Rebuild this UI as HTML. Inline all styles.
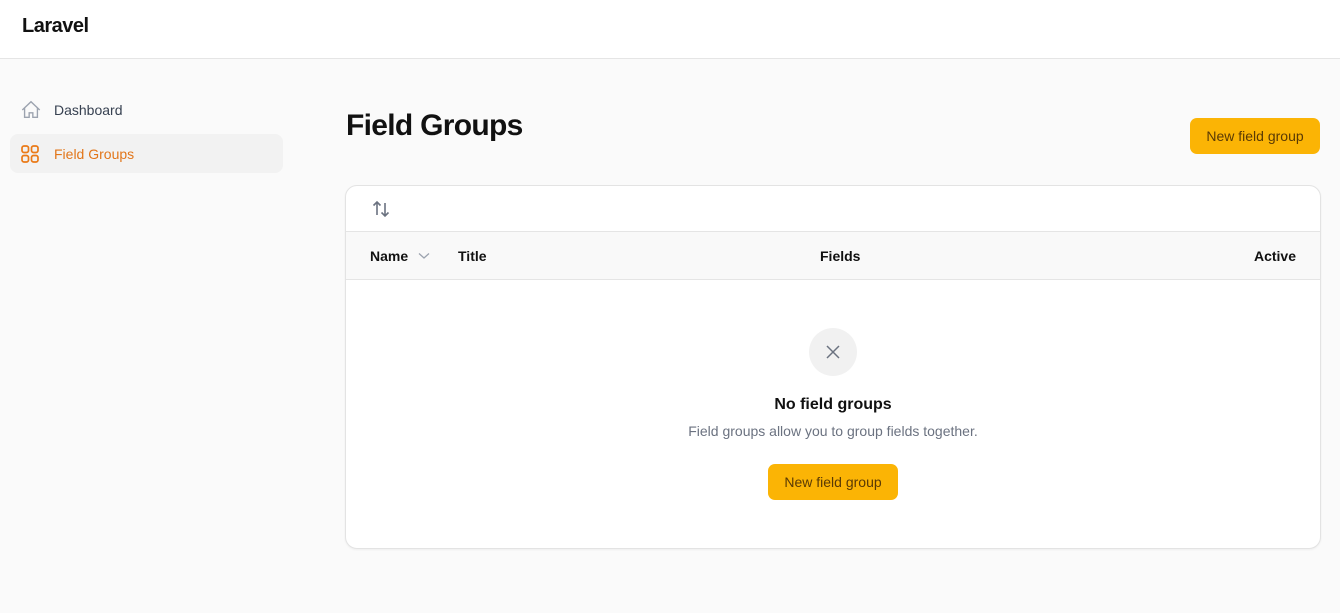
<!DOCTYPE html>
<html><head><style>
*{box-sizing:border-box;margin:0;padding:0}
body{width:1340px;height:613px;background:#fafafa;font-family:"Liberation Sans",sans-serif;color:#111;position:relative;overflow:hidden}
.top{position:absolute;left:0;top:0;width:1340px;height:59px;background:#fff;border-bottom:1px solid #e5e5e5}
.logo{position:absolute;left:22px;top:15px;font-size:20px;font-weight:bold;letter-spacing:-0.5px}
.nav{position:absolute;left:10px;width:273px;height:39px;border-radius:8px;font-size:14px;display:flex;align-items:center}
.nav svg{position:absolute;left:10px}
.nav span{position:absolute;left:44px}
h1{position:absolute;left:346px;top:109px;font-size:30px;font-weight:bold;letter-spacing:-0.7px}
.btn{position:absolute;background:#fbb405;color:#5a3a05;font-size:14px;border-radius:7px;display:flex;align-items:center;justify-content:center}
.card{position:absolute;left:345px;top:185px;width:976px;height:364px;background:#fff;border:1px solid #e3e3e3;border-radius:12px;overflow:hidden;box-shadow:0 1px 2px rgba(0,0,0,.05)}
.head{position:absolute;left:0;top:45px;width:100%;height:49px;background:#f9f9f9;border-top:1px solid #e5e5e5;border-bottom:1px solid #e5e5e5;font-size:14px;font-weight:bold}
.head div{position:absolute;top:16px}
</style></head><body>
<div class="top"><div class="logo">Laravel</div></div>
<div class="nav" style="top:90px"><svg width="22" height="22" viewBox="0 0 24 24" fill="none" stroke="#9ca3af" stroke-width="1.5"><path d="M2.5 12 12 3l9.5 9M5 10v10h5v-5h4v5h5V10"/></svg><span style="color:#374151">Dashboard</span></div>
<div class="nav" style="top:134px;background:#f2f2f2"><svg width="20" height="20" viewBox="0 0 20 20" fill="none" stroke="#ea7a17" stroke-width="1.7"><rect x="2" y="2" width="6.5" height="6.5" rx="2"/><rect x="11.5" y="2" width="6.5" height="6.5" rx="2"/><rect x="2" y="11.5" width="6.5" height="6.5" rx="2"/><rect x="11.5" y="11.5" width="6.5" height="6.5" rx="2"/></svg><span style="color:#e2761a">Field Groups</span></div>
<h1>Field Groups</h1>
<div class="btn" style="left:1190px;top:118px;width:130px;height:36px">New field group</div>
<div class="card">
<svg style="position:absolute;left:25px;top:13px" width="20" height="20" viewBox="0 0 20 20" fill="none" stroke="#6b7280" stroke-width="1.6"><path d="M6 16V3M2.5 6.5 6 3l3.5 3.5M14 4v13M10.5 13.5 14 17l3.5-3.5"/></svg>
<div class="head">
<div style="left:24px">Name</div>
<svg style="position:absolute;left:72px;top:20px" width="12" height="8" viewBox="0 0 12 8" fill="none" stroke="#9ca3af" stroke-width="1.3"><path d="M1 1.5 6 6l5-4.5"/></svg>
<div style="left:112px">Title</div>
<div style="left:474px">Fields</div>
<div style="right:24px">Active</div>
</div>
<div style="position:absolute;left:463px;top:142px;width:48px;height:48px;border-radius:50%;background:#f1f1f1"></div>
<svg style="position:absolute;left:479px;top:158px" width="16" height="16" viewBox="0 0 16 16" stroke="#6b7280" stroke-width="1.5"><path d="M2 2l12 12M14 2 2 14"/></svg>
<div style="position:absolute;left:0;width:100%;top:210px;text-align:center;font-size:16px;font-weight:bold">No field groups</div>
<div style="position:absolute;left:0;width:100%;top:237px;text-align:center;font-size:14px;color:#6b7280">Field groups allow you to group fields together.</div>
<div class="btn" style="left:422px;top:278px;width:130px;height:36px">New field group</div>
</div>
</body></html>
